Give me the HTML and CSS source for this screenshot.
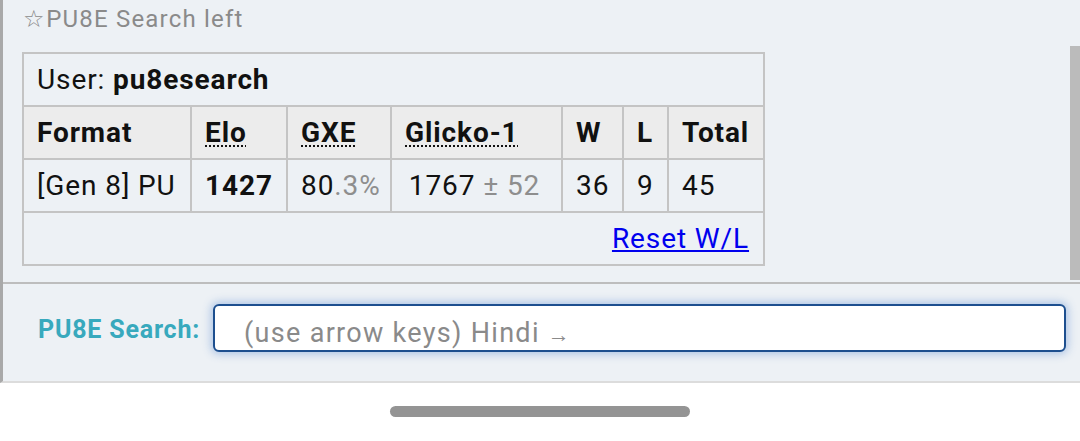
FILE: index.html
```html
<!DOCTYPE html>
<html>
<head>
<meta charset="utf-8">
<link rel="stylesheet" href="styles.css">
</head>
<body>
<div class="screen">
  <div class="panel">
    <div class="top">
      <div class="title">☆PU8E Search left</div>
      <table class="ladder">
        <colgroup>
          <col class="c-format"><col class="c-elo"><col class="c-gxe"><col class="c-glicko"><col class="c-w"><col class="c-l"><col class="c-total">
        </colgroup>
        <tr><td colspan="7" class="user">User: <strong>pu8esearch</strong></td></tr>
        <tr class="head">
          <th>Format</th>
          <th><abbr>Elo</abbr></th>
          <th><abbr>GXE</abbr></th>
          <th><abbr>Glicko-1</abbr></th>
          <th>W</th>
          <th>L</th>
          <th>Total</th>
        </tr>
        <tr>
          <td>[Gen 8] PU</td>
          <td><strong>1427</strong></td>
          <td>80<span class="dim">.3%</span></td>
          <td class="glicko">1767<span class="dim"> ± 52</span></td>
          <td>36</td>
          <td>9</td>
          <td>45</td>
        </tr>
        <tr><td colspan="7" class="reset"><a href="#">Reset W/L</a></td></tr>
      </table>
      <div class="scrollbar"></div>
    </div>
    <div class="searchbar">
      <label class="label">PU8E Search:</label>
      <div class="input"><span class="ph">(use arrow keys) Hindi <span class="arrow">→</span></span></div>
    </div>
  </div>
  <div class="navbar"><div class="pill"></div></div>
</div>
</body>
</html>
```
FILE: styles.css
```css
* { box-sizing: border-box; }
html, body { margin: 0; padding: 0; background: #fff; }
body { font-family: Roboto, "Noto Sans", sans-serif; color: #111; width: 1080px; height: 441px; overflow: hidden; }
.panel { background: #edf1f5; border-left: 3px solid #a9a9a9; border-bottom: 2px solid #dcdcdc; height: 383px; }
.top { position: relative; height: 284px; border-bottom: 2px solid #bdbdbd; padding: 2px 0 0 19px; }
.title { font-size: 24px; letter-spacing: 1.2px; color: #8a8a8a; line-height: 34px; height: 50px; padding-left: 1px; }
.ladder { border-collapse: collapse; table-layout: fixed; width: 741px; border: 2px solid #bcbcbc; font-size: 28px; letter-spacing: 0.9px; }
.c-format { width: 168px; } .c-elo { width: 96px; } .c-gxe { width: 104px; } .c-glicko { width: 171px; }
.c-w { width: 61px; } .c-l { width: 45px; } .c-total { width: 96px; }
.ladder td, .ladder th { border: 2px solid #c4c4c4; height: 53px; padding: 0 0 0 13px; text-align: left; white-space: nowrap; line-height: 32px; }
.ladder th { background: #ececec; font-weight: 700; }
.ladder abbr { text-decoration: underline dotted; text-underline-offset: 4px; text-decoration-thickness: 2px; }
.user { font-weight: 400; }
.dim { color: #8e8e8e; }
.glicko { text-align: center !important; padding: 0 4px 0 0 !important; }
.reset { text-align: right !important; padding: 0 14px 0 0 !important; }
.reset a { color: #0000ee; text-decoration: underline; }
.scrollbar { position: absolute; right: 0; top: 46px; width: 10px; height: 234px; background: #bbbbbb; }
.searchbar { display: flex; align-items: center; height: 97px; padding: 0 14px 9px 35px; gap: 13px; }
.label { color: #38a9bd; font-weight: 700; font-size: 25px; letter-spacing: 0.8px; padding-top: 3px; }
.input { flex: 1; height: 48px; background: #fff; border: 2px solid #1d4f8f; border-radius: 6px; box-shadow: 0 0 9px 2px rgba(90,140,210,0.45); display: flex; align-items: center; padding: 9px 0 0 29px; }
.ph { color: #8a8a8a; font-size: 27px; letter-spacing: 1.3px; }
.arrow { font-size: 22px; }
.navbar { height: 58px; display: flex; justify-content: center; padding-top: 23px; }
.pill { width: 300px; height: 11px; border-radius: 6px; background: #949494; }
```
